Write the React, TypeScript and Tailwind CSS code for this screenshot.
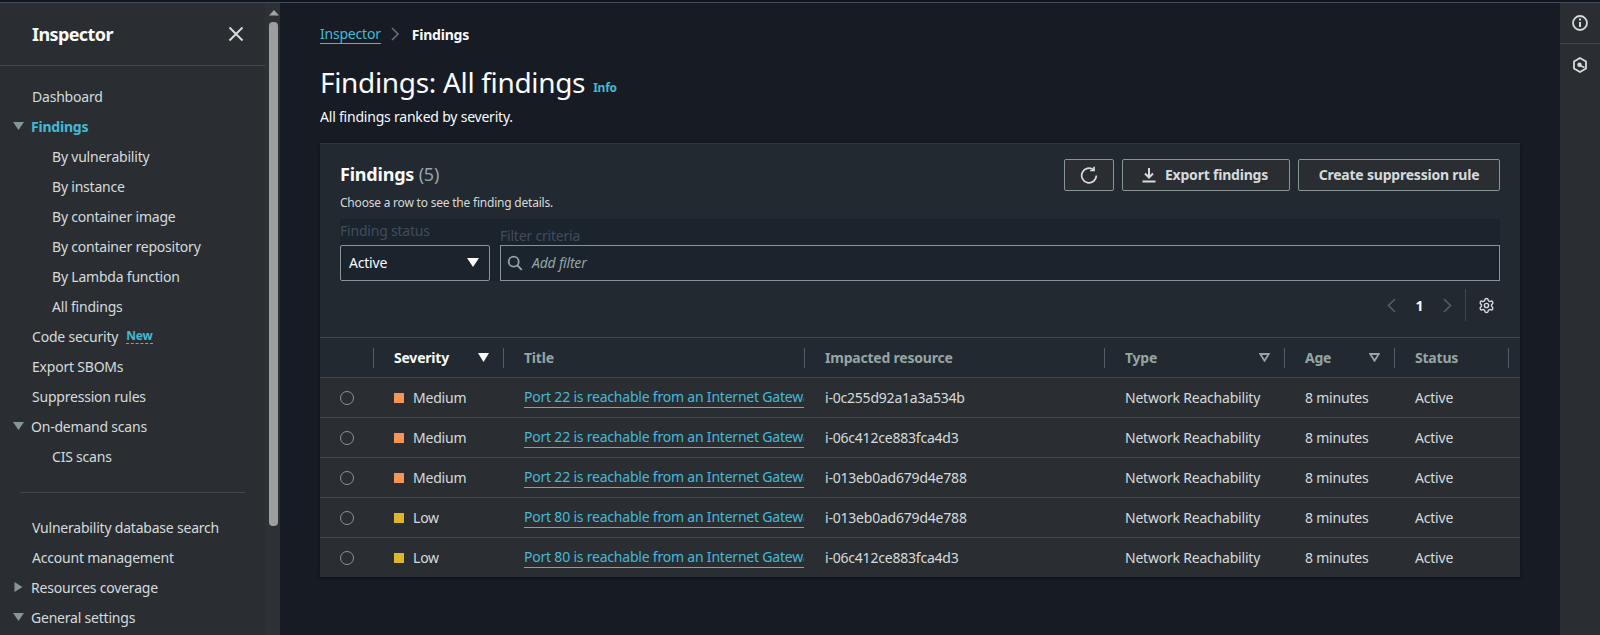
import React from "react";
import { Settings } from "lucide-react";

const Caret = ({ open }: { open: boolean }) => (
  <svg width="11" height="10" viewBox="0 0 11 10" className="shrink-0">
    {open ? <path d="M0 1h11L5.5 9z" fill="#879596" /> : <path d="M1.5 0v10l8-5z" fill="#879596" />}
  </svg>
);

function NavItem({ label, level = 0, caret, active, badge }: { label: string; level?: number; caret?: "open" | "closed"; active?: boolean; badge?: boolean }) {
  return (
    <div className={`h-[30px] flex items-center ${level === 1 ? "pl-[52px]" : caret ? "pl-[13px]" : "pl-[32px]"}`}>
      {caret && <span className="w-[18px] flex"><Caret open={caret === "open"} /></span>}
      <span className={active ? "text-[#44b9d6] font-bold" : "text-[#d5dbdb]"}>{label}</span>
      {badge && <span className="ml-2 text-[12px] leading-[15px] font-bold text-[#44b9d6] border-b border-dashed border-[#44b9d6]">New</span>}
    </div>
  );
}

const Sidebar = () => (
  <aside className="w-[280px] shrink-0 flex bg-[#2a2e33] overflow-hidden">
    <div className="w-[265px] shrink-0 flex flex-col">
      <div className="h-[63px] shrink-0 flex items-center justify-between pl-[32px] pr-[21px] border-b border-[#414750]">
        <span className="text-[18px] font-bold text-[#fafafa] tracking-[-0.6px]">Inspector</span>
        <svg width="16" height="16" viewBox="0 0 16 16" fill="none" stroke="#d5dbdb" strokeWidth="2"><path d="M1.5 1.5l13 13M14.5 1.5l-13 13" /></svg>
      </div>
      <nav className="pt-[15px]">
        <NavItem label="Dashboard" />
        <NavItem label="Findings" caret="open" active />
        <NavItem label="By vulnerability" level={1} />
        <NavItem label="By instance" level={1} />
        <NavItem label="By container image" level={1} />
        <NavItem label="By container repository" level={1} />
        <NavItem label="By Lambda function" level={1} />
        <NavItem label="All findings" level={1} />
        <NavItem label="Code security" badge />
        <NavItem label="Export SBOMs" />
        <NavItem label="Suppression rules" />
        <NavItem label="On-demand scans" caret="open" />
        <NavItem label="CIS scans" level={1} />
        <div className="mt-[21px] mb-[19px] ml-[20px] w-[225px] border-t border-[#414750]" />
        <NavItem label="Vulnerability database search" />
        <NavItem label="Account management" />
        <NavItem label="Resources coverage" caret="closed" />
        <NavItem label="General settings" caret="open" />
      </nav>
    </div>
    <div className="w-[15px] shrink-0 bg-[#2d3136] flex flex-col items-center pl-[2px]">
      <svg width="10" height="6" viewBox="0 0 10 6" className="mt-[7px] mb-[6px]"><path d="M0 5.5L5 0l5 5.5z" fill="#a3a3a3" /></svg>
      <div className="w-[9px] h-[504px] rounded-[4px] bg-[#9e9e9e]" />
    </div>
  </aside>
);

const Btn = ({ children, className = "" }: { children: React.ReactNode; className?: string }) => (
  <div className={`h-[32px] flex items-center justify-center border border-[#879596] rounded-[2px] bg-[#2a2e33] text-[#d5dbdb] font-bold ${className}`}>{children}</div>
);

const cols = ["w-[54px]", "w-[130px]", "w-[301px]", "w-[300px]", "w-[180px]", "w-[110px]", "w-[114px]"];

const HeadCell = ({ label, idx, sort, strong }: { label?: string; idx: number; sort?: "solid" | "outline"; strong?: boolean }) => (
  <div className={`${cols[idx]} shrink-0 h-[20px] border-r border-[#545b64] flex items-center justify-between ${idx > 0 ? "pl-[20px]" : ""} pr-[14px]`}>
    {label && <span className={`font-bold ${strong ? "text-[#fafafa]" : "text-[#95a5a6]"}`}>{label}</span>}
    {sort === "solid" && <svg width="11" height="9" viewBox="0 0 11 9"><path d="M0 0h11L5.5 9z" fill="#fafafa" /></svg>}
    {sort === "outline" && <svg width="11" height="9" viewBox="0 0 11 9" fill="none" stroke="#95a5a6" strokeWidth="1.8"><path d="M1.2 1h8.6L5.5 7.8z" /></svg>}
  </div>
);

const rows = [
  ["Medium", "Port 22", "i-0c255d92a1a3a534b"],
  ["Medium", "Port 22", "i-06c412ce883fca4d3"],
  ["Medium", "Port 22", "i-013eb0ad679d4e788"],
  ["Low", "Port 80", "i-013eb0ad679d4e788"],
  ["Low", "Port 80", "i-06c412ce883fca4d3"],
];

const Row = ({ sev, port, id }: { sev: string; port: string; id: string }) => (
  <div className="h-[40px] flex items-center border-t border-[#414750] text-[#d5dbdb]">
    <div className={`${cols[0]} shrink-0 pl-[20px]`}><div className="w-[14px] h-[14px] rounded-full border border-[#879596]" /></div>
    <div className={`${cols[1]} shrink-0 pl-[20px] flex items-center gap-[9px]`}>
      <span className={`w-[10px] h-[10px] ${sev === "Medium" ? "bg-[#fa9454]" : "bg-[#dfb52c]"}`} />
      {sev}
    </div>
    <div className={`${cols[2]} shrink-0 pl-[20px] pr-[1px]`}>
      <div className="overflow-hidden whitespace-nowrap text-[#44b9d6] border-b border-[#44b9d6] leading-[20px]">{port} is reachable from an Internet Gateway</div>
    </div>
    <div className={`${cols[3]} shrink-0 pl-[20px]`}>{id}</div>
    <div className={`${cols[4]} shrink-0 pl-[20px]`}>Network Reachability</div>
    <div className={`${cols[5]} shrink-0 pl-[20px]`}>8 minutes</div>
    <div className={`${cols[6]} shrink-0 pl-[20px]`}>Active</div>
  </div>
);

const Card = () => (
  <section className="w-[1200px] h-[434px] bg-[#232930] border-t border-[#2f353d] shadow-[0_1px_3px_rgba(0,0,0,0.5)] flex flex-col">
    <div className="px-[20px] pt-[15px] flex flex-col">
      <div className="flex justify-between h-[60px]">
        <div>
          <div className="text-[18px] leading-[30px] font-bold text-[#fafafa]">Findings <span className="font-normal text-[#95a5a6]">(5)</span></div>
          <div className="text-[12px] leading-[16px] mt-[6px] text-[#d5dbdb]">Choose a row to see the finding details.</div>
        </div>
        <div className="flex gap-[8px]">
          <Btn className="w-[50px]">
            <svg width="18" height="18" viewBox="0 0 16 16" fill="none" stroke="#d5dbdb" strokeWidth="1.5"><path d="M14.5 8.5A6.5 6.5 0 1 1 12 3.3" /><path d="M12.5 0.6v3.4H9" /></svg>
          </Btn>
          <Btn className="w-[168px] gap-[8px] pr-[3px] pb-[1px]">
            <svg width="16" height="16" viewBox="0 0 16 16" fill="none" stroke="#d5dbdb" strokeWidth="2"><path d="M8 1v9M4 6.5L8 10.5l4-4M1.5 14.5h13" /></svg>
            Export findings
          </Btn>
          <Btn className="w-[202px] pb-[1px]">Create suppression rule</Btn>
        </div>
      </div>
      <div className="bg-[#1b232d] h-[62px] flex gap-[10px]">
        <div className="w-[150px] shrink-0 flex flex-col">
          <div className="text-[#414d5c] h-[26px] leading-[24px]">Finding status</div>
          <div className="h-[36px] border border-[#879596] rounded-[2px] bg-[#1b232d] flex items-center justify-between pl-[8px] pr-[10px] pb-[1px] text-[#fafafa]">
            Active
            <svg width="12" height="9" viewBox="0 0 12 9"><path d="M0 0h12L6 9z" fill="#fafafa" /></svg>
          </div>
        </div>
        <div className="flex-1 flex flex-col">
          <div className="text-[#414d5c] h-[26px] leading-[34px]">Filter criteria</div>
          <div className="h-[36px] border border-[#879596] bg-[#1b232d] flex items-center pl-[6px] pb-[1px] gap-[9px]">
            <svg width="16" height="16" viewBox="0 0 16 16" fill="none" stroke="#95a5a6" strokeWidth="1.8"><circle cx="6.7" cy="6.7" r="5" /><path d="M10.5 10.5l4.3 4.3" /></svg>
            <span className="italic text-[#95a5a6]">Add filter</span>
          </div>
        </div>
      </div>
      <div className="h-[56px] flex items-start justify-end">
        <div className="mt-[8px] h-[32px] flex items-center text-[#fafafa] font-bold pr-[5px]">
          <svg width="9" height="15" viewBox="0 0 9 15" fill="none" stroke="#545b64" strokeWidth="1.7"><path d="M8 1L1.5 7.5 8 14" /></svg>
          <span className="w-[47px] text-center">1</span>
          <svg width="9" height="15" viewBox="0 0 9 15" fill="none" stroke="#545b64" strokeWidth="1.7"><path d="M1 1l6.5 6.5L1 14" /></svg>
          <span className="w-[1px] h-[32px] bg-[#414750] ml-[13px] mr-[12px]" />
          <Settings size={17} color="#d5dbdb" strokeWidth={2} />
        </div>
      </div>
    </div>
    <div className="h-[40px] flex items-center border-t border-[#414750]">
      <HeadCell idx={0} />
      <HeadCell idx={1} label="Severity" sort="solid" strong />
      <HeadCell idx={2} label="Title" />
      <HeadCell idx={3} label="Impacted resource" />
      <HeadCell idx={4} label="Type" sort="outline" />
      <HeadCell idx={5} label="Age" sort="outline" />
      <HeadCell idx={6} label="Status" />
    </div>
    <div className="bg-[#2a2e33] flex-1">
      {rows.map((r, i) => <Row key={i} sev={r[0]} port={r[1]} id={r[2]} />)}
    </div>
  </section>
);

const Main = () => (
  <main className="flex-1 min-w-0 bg-[#161b24] pl-[40px] flex flex-col">
    <div className="h-[61px] flex items-center text-[#d5dbdb] pt-[1px]">
      <span className="text-[#44b9d6] border-b border-[#44b9d6] leading-[18px]">Inspector</span>
      <svg width="9" height="14" viewBox="0 0 9 14" fill="none" stroke="#687078" strokeWidth="1.6" className="ml-[10px] mr-[12px]"><path d="M1 1l6 6-6 6" /></svg>
      <span className="font-bold text-[#fafafa]">Findings</span>
    </div>
    <div className="flex items-end h-[36px]">
      <span className="text-[28px] leading-[36px] text-[#fafafa] tracking-[-0.33px]">Findings: All findings</span>
      <span className="ml-[8px] mb-[2px] text-[12px] font-bold leading-[20px] text-[#44b9d6]">Info</span>
    </div>
    <div className="mt-[6px] h-[22px] leading-[22px] text-[#fafafa]">All findings ranked by severity.</div>
    <div className="mt-[15px]"><Card /></div>
  </main>
);

const Rail = () => (
  <aside className="w-[40px] shrink-0 bg-[#2a2e33] flex flex-col">
    <div className="h-[41px] flex items-center justify-center border-b border-[#414750]">
      <svg width="16" height="16" viewBox="0 0 16 16" fill="none" stroke="#d5dbdb" strokeWidth="1.8"><circle cx="8" cy="8" r="7" /><path d="M8 7v5" strokeWidth="2" /><path d="M8 3.6v2" strokeWidth="2" /></svg>
    </div>
    <div className="h-[41px] flex items-center justify-center">
      <svg width="16" height="16" viewBox="0 0 16 16" fill="none" stroke="#d5dbdb" strokeWidth="1.8"><path d="M8 1l6 3.5v7L8 15l-6-3.5v-7z" /><circle cx="7.5" cy="7.8" r="2.2" fill="#d5dbdb" stroke="none" /><path d="M8 8.5l4.5 2" strokeWidth="1.4" /></svg>
    </div>
  </aside>
);

export default function App() {
  return (
    <div className="w-[1600px] h-[635px] overflow-hidden flex flex-col bg-[#161b24] text-[14px] tracking-[-0.21px] font-['Noto_Sans',sans-serif]">
      <div className="h-[3px] shrink-0 bg-[#12161c] border-b border-[#414d5c]" />
      <div className="flex flex-1 min-h-0">
        <Sidebar />
        <Main />
        <Rail />
      </div>
    </div>
  );
}
